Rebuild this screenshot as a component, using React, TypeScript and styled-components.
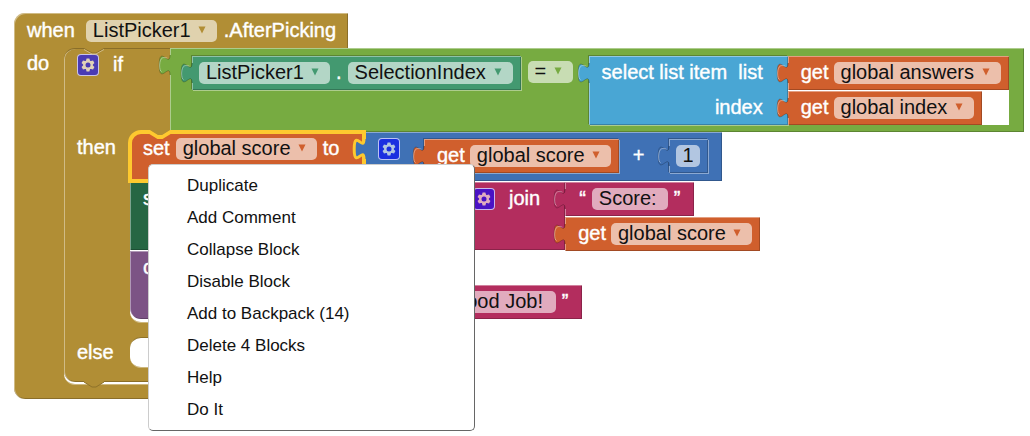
import React from "react";
import styled, { createGlobalStyle, css } from "styled-components";

const color = {
  control: "#b18e35",
  logic: "#77ab41",
  component: "#439970",
  setter: "#266643",
  method: "#7c5385",
  list: "#49a6d4",
  variable: "#d05f2d",
  math: "#3f71b5",
  text: "#b32d5e",
  selected: "#fec92f",
};

const LIGHT = "rgba(255, 255, 255, 0.4)";
const DARK = "rgba(0, 0, 0, 0.22)";

const GlobalStyle = createGlobalStyle`
  * { box-sizing: border-box; }
  body {
    margin: 0;
    background: #fff;
    font-family: "Liberation Sans", Arial, sans-serif;
  }
`;

const Workspace = styled.main`
  position: relative;
  padding: 13px 0 36px 14px;
`;

/* ---------- fields ---------- */

const Label = styled.span`
  color: #fff;
  font-size: 20px;
  line-height: 20px;
  white-space: pre;
  -webkit-text-stroke: 0.4px #fff;
`;

const DropdownBox = styled.span`
  display: grid;
  align-items: center;
  align-content: end;
  height: 22px;
  flex: none;
  border-radius: 5px;
  background: rgba(255, 255, 255, 0.6);
`;

const DropdownSelect = styled.select`
  grid-area: 1 / 1;
  appearance: none;
  height: 24px;
  margin: 0;
  padding: 0 26px 0 7px;
  border: 0;
  background: none;
  color: #111;
  font-family: inherit;
  font-size: 20px;
  line-height: 24px;
`;

const Arrow = styled.svg`
  grid-area: 1 / 1;
  justify-self: end;
  width: 10px;
  height: 8px;
  margin-right: 10px;
  pointer-events: none;
`;

const TextField = styled.input<{ $width: number }>`
  width: ${(p) => p.$width}px;
  height: 22px;
  margin: 0;
  padding: 0 7px 2px;
  border: 0;
  border-radius: 5px;
  background: rgba(255, 255, 255, 0.6);
  color: #111;
  font-family: inherit;
  font-size: 20px;
  line-height: 20px;
`;

const GearButton = styled.button<{ $fill: string }>`
  display: grid;
  place-items: center;
  flex: none;
  width: 22px;
  height: 22px;
  padding: 0;
  border: 1px solid rgba(255, 255, 255, 0.7);
  border-radius: 4px;
  background: ${(p) => p.$fill};
`;

function Dropdown({ value, name, fill }: { value: string; name: string; fill: string }) {
  return (
    <DropdownBox>
      <DropdownSelect aria-label={name} defaultValue={value}>
        <option>{value}</option>
      </DropdownSelect>
      <Arrow viewBox="0 0 10 8" aria-hidden="true">
        <path d="M1.5 0.5h7L5 7.500z" fill={fill} />
      </Arrow>
    </DropdownBox>
  );
}

function Gear({ fill, teeth }: { fill: string; teeth: string }) {
  return (
    <GearButton $fill={fill} type="button" aria-label="Edit block inputs">
      <svg width="16" height="16" viewBox="-8 -8 16 16" aria-hidden="true">
        {[0, 60, 120].map((a) => (
          <path key={a} d="M-1.4-6.600h2.800L2.200-3.500V3.500L1.400 6.600h-2.800L-2.200 3.500V-3.500z" fill={teeth} transform={`rotate(${a})`} />
        ))}
        <circle r="4.700" fill={teeth} />
        <circle r="2.500" fill={fill} />
      </svg>
    </GearButton>
  );
}

/* ---------- connectors ---------- */

const TabSvg = styled.svg`
  position: absolute;
  left: -11px;
  top: 7px;
  width: 12px;
  height: 20px;
  overflow: visible;
`;

function Tab({ fill }: { fill: string }) {
  return (
    <TabSvg viewBox="0 0 12 20" aria-hidden="true">
      <path d="M12 0H11c0 13.5-10.8-10.8-10.8 10s10.8-3.4 10.8 10h1z" fill={fill} />
      <path d="M11 0c0 13.5-10.8-10.8-10.8 10s10.8-3.4 10.8 10" fill="none" stroke={DARK} />
      <path d="M8.5 3.2C5 2 1 1.5 .6 10c0 4 .6 6 2 6.6" fill="none" stroke={LIGHT} />
    </TabSvg>
  );
}

const NotchSvg = styled.svg<{ $bottom?: boolean }>`
  position: absolute;
  z-index: 2;
  left: 20px;
  ${(p) => (p.$bottom ? "bottom: -6px;" : "top: -2px;")}
  width: 20px;
  height: 8px;
  overflow: visible;
`;

/* ---------- blocks ---------- */

const Block = styled.div<{ $fill: string; $inline?: boolean }>`
  position: relative;
  display: flex;
  flex: none;
  align-items: flex-start;
  background: ${(p) => p.$fill};
  box-shadow: inset 1px 1px 0 ${LIGHT}, inset -1px -1px 0 ${DARK};
  ${(p) =>
    p.$inline &&
    css`
      box-shadow: inset 1px 1px 0 ${LIGHT}, inset -1px -1px 0 ${DARK}, -1px -1px 0 ${DARK}, 1px 1px 0 ${LIGHT};
    `}
`;

const ValueBlock = styled(Block)`
  gap: 5px;
  height: 34px;
  padding: 6px 8px 0 13px;
`;

const PropertyBlock = styled(ValueBlock)`
  gap: 6px;
  padding-left: 7px;
`;

const StringBlock = styled(ValueBlock)`
  gap: 6px;
  padding: 6px 14px 0;
`;

const NumberBlock = styled(ValueBlock)`
  padding: 6px 8px 0 7px;
`;

const CompareBlock = styled(Block)`
  height: 84px;
  padding: 8px 15px 0 22px;
`;

const OperatorSlot = styled.div`
  padding: 5px 16px 0 7px;
`;

const InputStack = styled.div<{ $white?: boolean }>`
  position: relative;
  display: flex;
  flex-direction: column;
  flex: none;
  align-items: flex-start;
  gap: 1px;
  ${(p) => p.$white && "background: #fff;"}
`;

const ListLabels = styled(Block)`
  flex-direction: column;
  align-items: flex-end;
  gap: 15px;
  height: 69px;
  padding: 6px 25px 0 13px;
`;

const Row = styled.div`
  display: flex;
  align-items: flex-start;
`;

const MathBlock = styled(Block)`
  height: 49px;
  padding: 6px 14px 0;
`;

const MathOperand = styled.div`
  padding: 1px 0 0 24px;
`;

const MathOperator = styled.div`
  padding: 7px 0 0 14px;
`;

const EventHeader = styled(Block)`
  gap: 7px;
  width: max-content;
  height: 35px;
  padding: 7px 12px 0 13px;
  border-top-left-radius: 11px;
  box-shadow: inset 1px 1px 0 ${LIGHT}, inset -1px 0 0 ${DARK};
`;

const EventName = styled(Label)`
  padding-right: 4px;
`;

/* The arm of a C-shaped block: the label column, then the nested statements. */
const ArmRow = styled.div<{ $arm: number }>`
  display: flex;
  align-items: stretch;
  background: linear-gradient(${color.control}, ${color.control}) left / ${(p) => p.$arm + 18}px 100% no-repeat;
`;

const Arm = styled.div<{ $arm: number }>`
  display: flex;
  flex: none;
  align-items: flex-start;
  gap: 14px;
  width: ${(p) => p.$arm}px;
  padding: 5px 0 0 13px;
  box-shadow: inset 1px 0 0 ${LIGHT};
`;

const GearArm = styled(Arm)`
  align-self: stretch;
  border-top: 1px solid ${DARK};
  border-top-left-radius: 11px;
  background: ${color.control};
`;

/* Statements run past the slot's own width, as value blocks reach to the right. */
const Slot = styled.div<{ $gap: number }>`
  flex: none;
  width: 200px;
  padding-bottom: ${(p) => p.$gap}px;
  border-bottom: 1px solid #cdb77d;
  border-bottom-left-radius: 11px;
  background: #fff;
`;

const EmptySlot = styled.div`
  width: 34px;
  height: 31px;
  border-top: 1px solid #8e722a;
  border-bottom: 1px solid #cdb77d;
  border-radius: 11px 0 0 11px;
  background: #fff;
`;

const Bar = styled.div<{ $last?: boolean }>`
  position: relative;
  width: 334px;
  height: 14px;
  background: ${color.control};
  box-shadow: inset 1px 0 0 ${LIGHT};
  ${(p) =>
    p.$last &&
    css`
      border-bottom-left-radius: 11px;
      box-shadow: inset 1px 0 0 ${LIGHT}, inset 0 -1px 0 ${DARK};
    `}
`;

const IfBlock = styled.div`
  position: relative;
  background: linear-gradient(${color.control}, ${color.control}) left top / 60px 60px no-repeat;
`;

const Statement = styled(Block)<{ $width: number; $last?: boolean }>`
  width: ${(p) => p.$width}px;
  height: 68px;
  padding: 6px 0 0 13px;
  ${(p) => p.$last && "border-bottom-left-radius: 11px;"}
`;

const SelectedStatement = styled(Block)`
  z-index: 1;
  gap: 6px;
  width: 234px;
  height: 49px;
  padding: 6px 0 0 13px;
  border-top-left-radius: 11px;
  &::after {
    content: "";
    position: absolute;
    inset: -2px;
    border: 4px solid ${color.selected};
    border-top-left-radius: 13px;
    pointer-events: none;
  }
`;

const SelectedRow = styled(Row)`
  height: 50px;
  background: linear-gradient(${color.control}, ${color.control}) left / 20px 100% no-repeat;
`;

const SocketSvg = styled.svg`
  position: absolute;
  z-index: 2;
  right: -2px;
  top: 7px;
  width: 14px;
  height: 20px;
  overflow: visible;
`;

const JoinBlock = styled(Block)`
  gap: 14px;
  height: 68px;
  padding: 6px 25px 0 13px;
`;

const SecondInput = styled.div`
  flex: none;
  padding-top: 34px;
`;

/* ---------- context menu ---------- */

const Menu = styled.ul`
  position: absolute;
  z-index: 10;
  left: 148px;
  top: 164px;
  width: 327px;
  margin: 0;
  padding: 5px 0 4px;
  list-style: none;
  background: #fff;
  border: 1px solid #ccc;
  border-right-color: #666;
  border-bottom-color: #666;
  border-radius: 5px;
`;

const MenuButton = styled.button`
  display: block;
  width: 100%;
  height: 32px;
  padding: 0 38px;
  border: 0;
  background: none;
  color: #111;
  font-family: inherit;
  font-size: 17px;
  line-height: 32px;
  text-align: left;
  white-space: pre;
`;

function Getter({ name, inline }: { name: string; inline?: boolean }) {
  return (
    <ValueBlock $fill={color.variable} $inline={inline}>
      <Tab fill={color.variable} />
      <Label>get</Label>
      <Dropdown value={name} name="Variable" fill={color.variable} />
    </ValueBlock>
  );
}

function StringLiteral({ value, width }: { value: string; width: number }) {
  return (
    <StringBlock $fill={color.text}>
      <Tab fill={color.text} />
      <Label>“</Label>
      <TextField aria-label="Text" defaultValue={value} $width={width} />
      <Label>”</Label>
    </StringBlock>
  );
}

function Condition() {
  return (
    <CompareBlock $fill={color.logic}>
      <Tab fill={color.logic} />
      <PropertyBlock $fill={color.component} $inline>
        <Tab fill={color.component} />
        <Dropdown value="ListPicker1" name="Component" fill={color.component} />
        <Label>.</Label>
        <Dropdown value="SelectionIndex" name="Property" fill={color.component} />
      </PropertyBlock>
      <OperatorSlot>
        <Dropdown value="=" name="Comparison" fill={color.logic} />
      </OperatorSlot>
      <ListLabels $fill={color.list} $inline>
        <Tab fill={color.list} />
        <Label>select list item  list</Label>
        <Label>index</Label>
      </ListLabels>
      <InputStack $white>
        <Getter name="global answers" />
        <Getter name="global index" />
      </InputStack>
    </CompareBlock>
  );
}

function SetScore() {
  return (
    <SelectedRow>
      <SelectedStatement $fill={color.variable}>
        <NotchSvg viewBox="0 0 20 8" aria-hidden="true">
          <path d="M0-1V2l8 5h4l8-5V-1z" fill={color.control} />
          <path d="M-1 2H0l8 5h4l8-5h1" fill="none" stroke={color.selected} strokeWidth="4" />
          <path d="M0-1V0l8 5h4l8-5V-1z" fill={color.control} />
        </NotchSvg>
        <Label>set</Label>
        <Dropdown value="global score" name="Variable" fill={color.variable} />
        <Label>to</Label>
        <SocketSvg viewBox="0 0 14 20" aria-hidden="true">
          <path d="M15 0H12c0 13.5-10.8-10.8-10.8 10s10.8-3.4 10.8 10h3z" fill={color.math} />
          <path
            d="M12 0c0 13.5-9.8-10.8-9.8 10s9.8-3.4 9.8 10"
            fill="none"
            stroke={color.selected}
            strokeWidth="3"
          />
        </SocketSvg>
      </SelectedStatement>
      <MathBlock $fill={color.math}>
        <Gear fill="#1b2fe0" teeth="#b2c6e1" />
        <MathOperand>
          <Getter name="global score" inline />
        </MathOperand>
        <MathOperator>
          <Label>+</Label>
        </MathOperator>
        <MathOperand>
          <NumberBlock $fill={color.math} $inline>
            <Tab fill={color.math} />
            <TextField aria-label="Number" defaultValue="1" $width={24} />
          </NumberBlock>
        </MathOperand>
      </MathBlock>
    </SelectedRow>
  );
}

const menuItems = [
  "Duplicate",
  "Add Comment",
  "Collapse Block",
  "Disable Block",
  "Add to Backpack (14)",
  "Delete 4 Blocks",
  "Help",
  "Do It",
];

export default function App() {
  return (
    <Workspace>
      <GlobalStyle />
      <EventHeader $fill={color.control}>
        <EventName>when</EventName>
        <Dropdown value="ListPicker1" name="Component" fill={color.control} />
        <Label>.AfterPicking</Label>
      </EventHeader>
      <ArmRow $arm={50}>
        <Arm $arm={50}>
          <Label>do</Label>
        </Arm>
        <Slot $gap={2}>
          <IfBlock>
            <NotchSvg viewBox="0 0 20 8" aria-hidden="true">
              <path d="M0 2.500l8 5h4l8-5V0H0z" fill={color.control} />
              <path d="M0 2.500l8 4.500h4l8-4.500" fill="none" stroke="#8e722a" />
              <path d="M0 3.500l8 4.500h4l8-4.500" fill="none" stroke="#d0bb85" />
            </NotchSvg>
            <Row>
              <GearArm $arm={106}>
                <Gear fill="#4a3bb5" teeth="#e0d2b8" />
                <Label>if</Label>
              </GearArm>
              <Condition />
            </Row>
            <ArmRow $arm={66}>
              <Arm $arm={66}>
                <Label>then</Label>
              </Arm>
              <Slot $gap={3}>
                <SetScore />
                <Row>
                  <Statement $fill={color.setter} $width={330}>
                    <Label>set</Label>
                  </Statement>
                  <JoinBlock $fill={color.text}>
                    <Gear fill="#4a12c4" teeth="#e1abbf" />
                    <Label>join</Label>
                  </JoinBlock>
                  <InputStack>
                    <StringLiteral value="Score: " width={76} />
                    <Getter name="global score" />
                  </InputStack>
                </Row>
                <Row>
                  <Statement $fill={color.method} $width={287} $last>
                    <Label>call</Label>
                  </Statement>
                  <SecondInput>
                    <StringLiteral value="Good Job!" width={112} />
                  </SecondInput>
                </Row>
              </Slot>
            </ArmRow>
            <Bar />
            <ArmRow $arm={66}>
              <Arm $arm={66}>
                <Label>else</Label>
              </Arm>
              <EmptySlot />
            </ArmRow>
            <Bar $last>
              <NotchSvg $bottom viewBox="0 0 20 8" aria-hidden="true">
                <path d="M0 0V2l8 5h4l8-5V0z" fill={color.control} />
                <path d="M0 2l8 5h4l8-5" fill="none" stroke="#8e722a" />
              </NotchSvg>
            </Bar>
          </IfBlock>
        </Slot>
      </ArmRow>
      <Bar $last />
      <Menu role="menu">
        {menuItems.map((item) => (
          <li key={item} role="none">
            <MenuButton role="menuitem" type="button">
              {item}
            </MenuButton>
          </li>
        ))}
      </Menu>
    </Workspace>
  );
}
